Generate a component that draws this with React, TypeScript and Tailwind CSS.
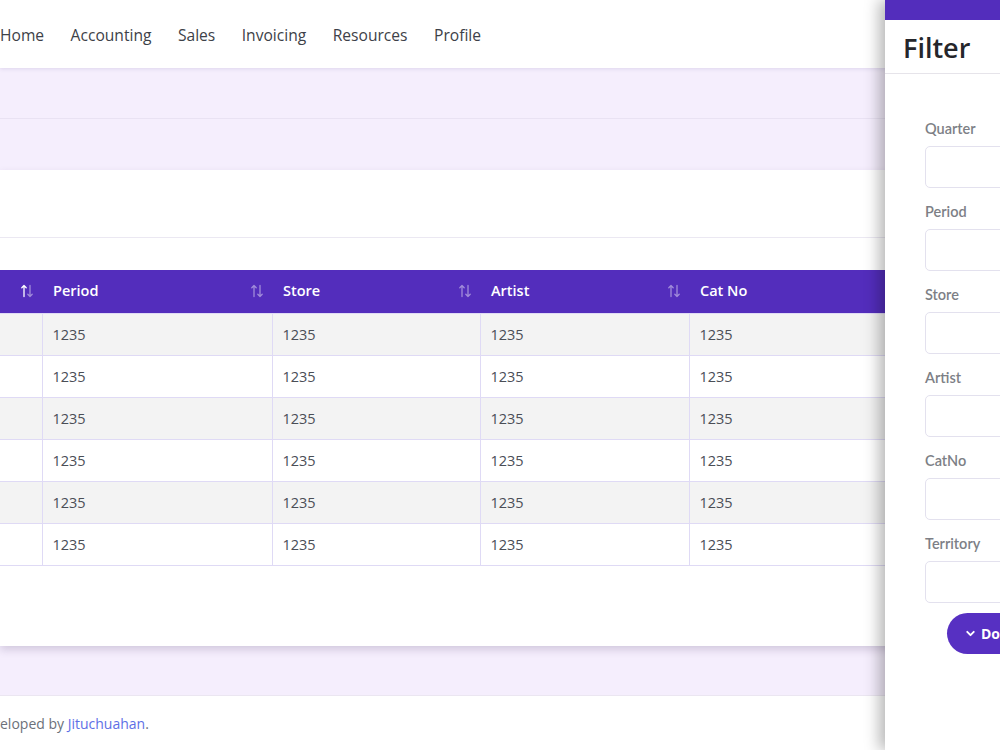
import { ChevronDown } from 'lucide-react';

const navItems = ['Home', 'Accounting', 'Sales', 'Invoicing', 'Resources', 'Profile'];
const columns = [
  { label: '', width: 'w-[42px]', active: true },
  { label: 'Period', width: 'w-[230px]' },
  { label: 'Store', width: 'w-[208px]' },
  { label: 'Artist', width: 'w-[209px]' },
  { label: 'Cat No', width: 'w-[400px]' },
];
const rows = [0, 1, 2, 3, 4, 5];
const filterFields = ['Quarter', 'Period', 'Store', 'Artist', 'CatNo', 'Territory'];

function SortIcon({ active }: { active?: boolean }) {
  return (
    <svg width="14" height="14" viewBox="0 0 14 14" fill="none" strokeWidth="1.3" strokeLinecap="round" strokeLinejoin="round">
      <g stroke="white" opacity={active ? 1 : 0.45}>
        <path d="M4 12.5V1.5M1.8 3.7L4 1.5l2.2 2.2" />
      </g>
      <g stroke="white" opacity={0.45}>
        <path d="M10 1.5v11M7.8 10.3L10 12.5l2.2-2.2" />
      </g>
    </svg>
  );
}

export default function App() {
  return (
    <div className="relative w-[1000px] h-[750px] overflow-hidden bg-white font-['Open_Sans',sans-serif]">
      <div className="flex flex-col w-[1000px]">
        <nav className="relative z-10 h-[68px] pt-[3px] bg-white shadow-[0_1px_4px_rgba(60,40,120,0.12)] flex items-center gap-[26.5px] text-[15.6px] text-[#3d4148]">
          {navItems.map((item) => (
            <span key={item}>{item}</span>
          ))}
        </nav>

        <div className="h-[51px] bg-[#f5eefd] border-b border-[#e9e2f3]" />
        <div className="h-[51px] bg-[#f5eefd]" />

        <div className="relative z-10 bg-white shadow-[0_4px_8px_rgba(60,40,90,0.18)]">
          <div className="h-[68px] border-b border-[#ebe8f2]" />
          <div className="pt-[32px] pb-[80px]">
            <table className="w-[1089px] border-collapse table-fixed text-[14.5px]">
              <thead>
                <tr className="bg-[#532dbc] text-white h-[43px]">
                  {columns.map((col, i) => (
                    <th key={i} className={`${col.width} pl-[11px] pr-[8px] text-left font-semibold text-[14.5px]`}>
                      <div className="flex items-center justify-between">
                        <span>{col.label}</span>
                        {i < 4 && <SortIcon active={col.active} />}
                      </div>
                    </th>
                  ))}
                </tr>
              </thead>
              <tbody>
                {rows.map((r) => (
                  <tr key={r} className={`h-[42px] ${r % 2 === 0 ? 'bg-[#f3f3f3]' : 'bg-white'} text-[#4a4e56]`}>
                    {columns.map((col, i) => (
                      <td key={i} className={`${col.width} px-[10px] pt-[2px] border border-[#dfdaf5] border-l-0 ${i === 0 ? '' : 'border-l'}`}>
                        {i === 0 ? '' : '1235'}
                      </td>
                    ))}
                  </tr>
                ))}
              </tbody>
            </table>
          </div>
        </div>

        <div className="h-[50px] bg-[#f5eefd] border-b border-[#ebe6f1]" />
        <footer className="h-[55px] bg-white flex items-center text-[14px] text-[#6c717a] -ml-[25px]">
          <span>
            Developed by <span className="text-[#5e6fe6]">Jituchuahan</span>.
          </span>
        </footer>
      </div>

      <aside className="absolute z-30 top-0 right-0 h-full w-[115px] bg-white shadow-[-6px_0_14px_rgba(0,0,0,0.28)] flex flex-col">
        <div className="h-[20px] bg-[#532dbc]" />
        <div className="h-[54px] pt-[3px] border-b border-[#e6e4ea] flex items-center pl-[18px]">
          <h2 className="text-[27px] font-semibold text-[#25262b] whitespace-nowrap">Filter</h2>
        </div>
        <div className="pl-[40px] pt-[45px] flex flex-col font-['Lato',sans-serif]">
          {filterFields.map((f) => (
            <div key={f} className="flex flex-col mb-[14px]">
              <label className="h-[20px] leading-[20px] text-[14.5px] font-semibold text-[#7d7f86] mb-[7px]">{f}</label>
              <div className="h-[42px] w-[120px] border border-[#e3e1ee] rounded-[5px]" />
            </div>
          ))}
          <button className="ml-[22px] -mt-[4px] h-[41px] w-[140px] rounded-full bg-[#5730c2] text-white font-bold text-[14px] flex items-center gap-[4px] pl-[17px] font-['Open_Sans',sans-serif]">
            <ChevronDown size={13} strokeWidth={3.5} />
            <span>Download</span>
          </button>
        </div>
      </aside>
    </div>
  );
}
